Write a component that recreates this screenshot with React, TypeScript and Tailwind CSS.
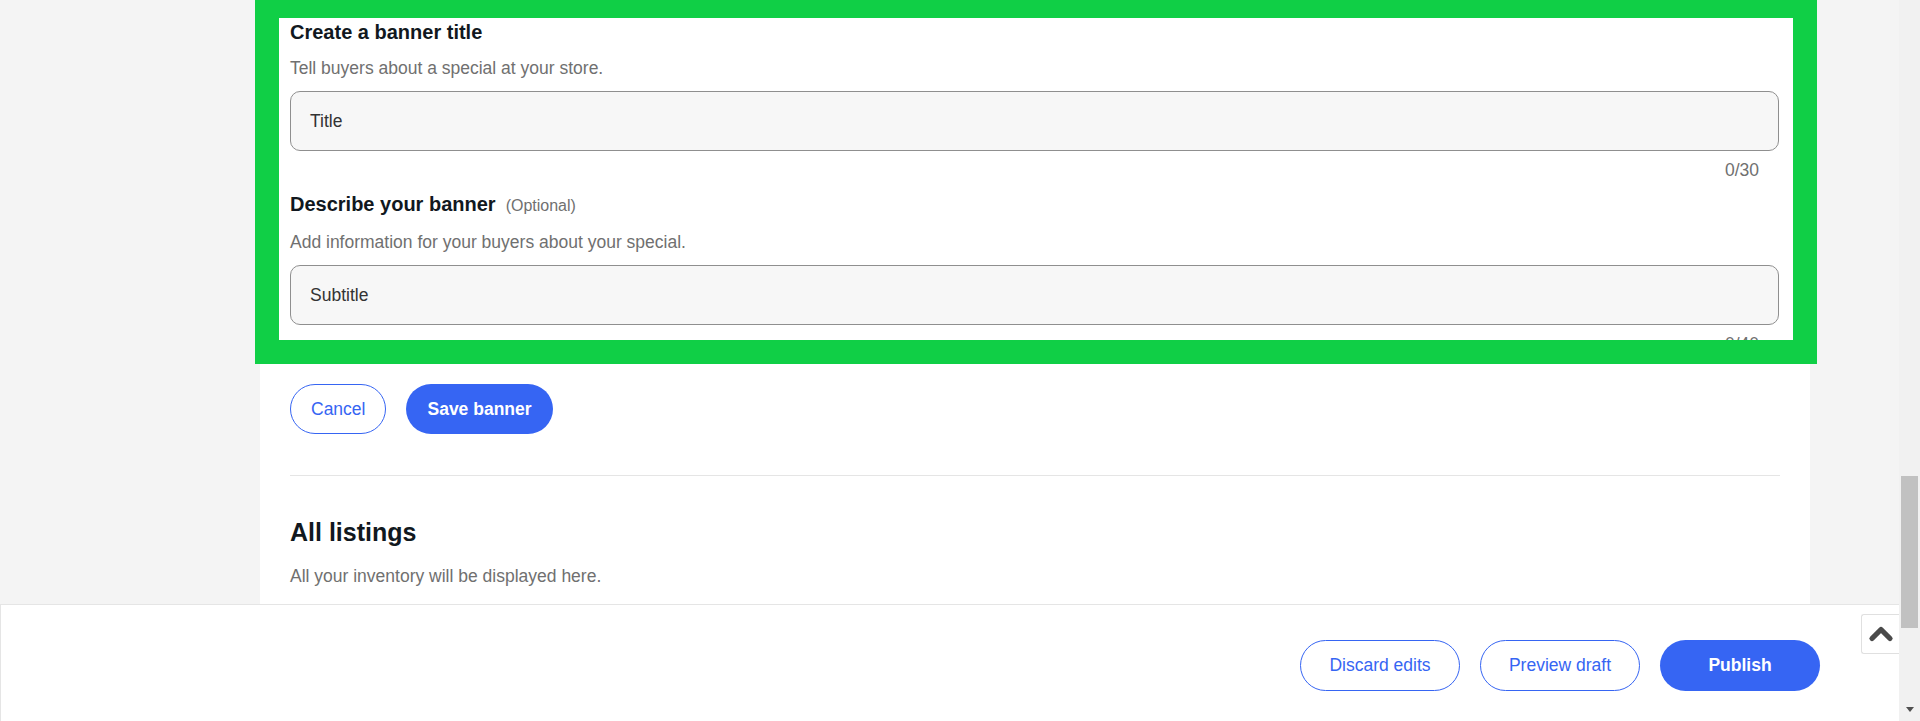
import { ChevronUp } from "lucide-react";

function Field({ label, optional, help, placeholder, count }: { label: string; optional?: boolean; help: string; placeholder: string; count: string }) {
  return (
    <div>
      <div className="flex items-baseline leading-[24px]">
        <h3 className="text-[20px] font-bold text-[#111820]">{label}</h3>
        {optional && <span className="ml-[10px] text-[16px] text-[#707070]">(Optional)</span>}
      </div>
      <p className="mt-[12px] text-[17.5px] leading-[24px] text-[#707070]">{help}</p>
      <div className="mt-[11px] h-[60px] rounded-[10px] border border-[#8f8f8f] bg-[#f7f7f7] px-[19px] flex items-center text-[17.5px] text-[#333]">
        {placeholder}
      </div>
      <div className="mt-[7px] pr-[20px] text-right text-[17.5px] leading-[24px] text-[#707070]">{count}</div>
    </div>
  );
}

export default function App() {
  return (
    <div className="flex h-[721px] w-full overflow-hidden bg-[#f4f4f4] font-['Liberation_Sans',Arial,sans-serif]">
      <div className="relative flex-1 overflow-hidden">
        {/* Card */}
        <div className="ml-[260px] w-[1550px] bg-white px-[30px] pb-[200px]">
          {/* Highlighted editor area */}
          <div className="-ml-[35px] -mr-[37px] border-[#10cf46] border-l-[24px] border-r-[24px] border-t-[18px] border-b-[24px]">
            <div className="h-[322px] overflow-hidden bg-white pl-[11px] pr-[14px] pt-[2px]">
              <Field
                label="Create a banner title"
                help="Tell buyers about a special at your store."
                placeholder="Title"
                count="0/30"
              />
              <div className="mt-[10px]">
                <Field
                  label="Describe your banner"
                  optional
                  help="Add information for your buyers about your special."
                  placeholder="Subtitle"
                  count="0/40"
                />
              </div>
            </div>
          </div>

          <div className="mt-[20px] flex gap-[20px]">
            <button className="h-[50px] rounded-full border border-[#3665f3] px-[20px] text-[17.5px] text-[#3665f3]">
              Cancel
            </button>
            <button className="h-[50px] rounded-full bg-[#3665f3] px-[21px] text-[17.5px] font-bold text-white">
              Save banner
            </button>
          </div>

          <div className="mt-[41px] h-px bg-[#e5e5e5]" />

          <h2 className="mt-[41px] text-[25px] font-bold leading-[30px] text-[#111820]">All listings</h2>
          <p className="mt-[17px] text-[17.5px] leading-[24px] text-[#707070]">All your inventory will be displayed here.</p>
        </div>

        {/* Sticky footer */}
        <div className="absolute bottom-0 left-0 right-0 h-[117px] border-l border-t border-[#e5e5e5] bg-white">
          <div className="flex justify-end gap-[20px] pr-[79px] pt-[35px]">
            <button className="h-[51px] w-[160px] rounded-full border border-[#3665f3] text-[17.5px] text-[#3665f3]">
              Discard edits
            </button>
            <button className="h-[51px] w-[160px] rounded-full border border-[#3665f3] text-[17.5px] text-[#3665f3]">
              Preview draft
            </button>
            <button className="h-[51px] w-[160px] rounded-full bg-[#3665f3] text-[17.5px] font-bold text-white">
              Publish
            </button>
          </div>
          <button className="absolute right-0 top-[9px] flex h-[40px] w-[38px] items-center justify-center rounded-l-[3px] border border-r-0 border-[#e0e0e0] bg-white text-[#4a4a4a]">
            <ChevronUp size={36} strokeWidth={3.5} />
          </button>
        </div>
      </div>

      {/* Scrollbar */}
      <div className="flex w-[21px] flex-col bg-[#f1f1f1]">
        <div className="mx-[2px] mt-[476px] h-[152px] bg-[#c1c1c1]" />
        <div className="flex-1" />
        <div className="flex h-[14px] items-start justify-center">
          <div className="h-0 w-0 border-l-[4px] border-r-[4px] border-t-[5px] border-l-transparent border-r-transparent border-t-[#505050]" />
        </div>
      </div>
    </div>
  );
}
